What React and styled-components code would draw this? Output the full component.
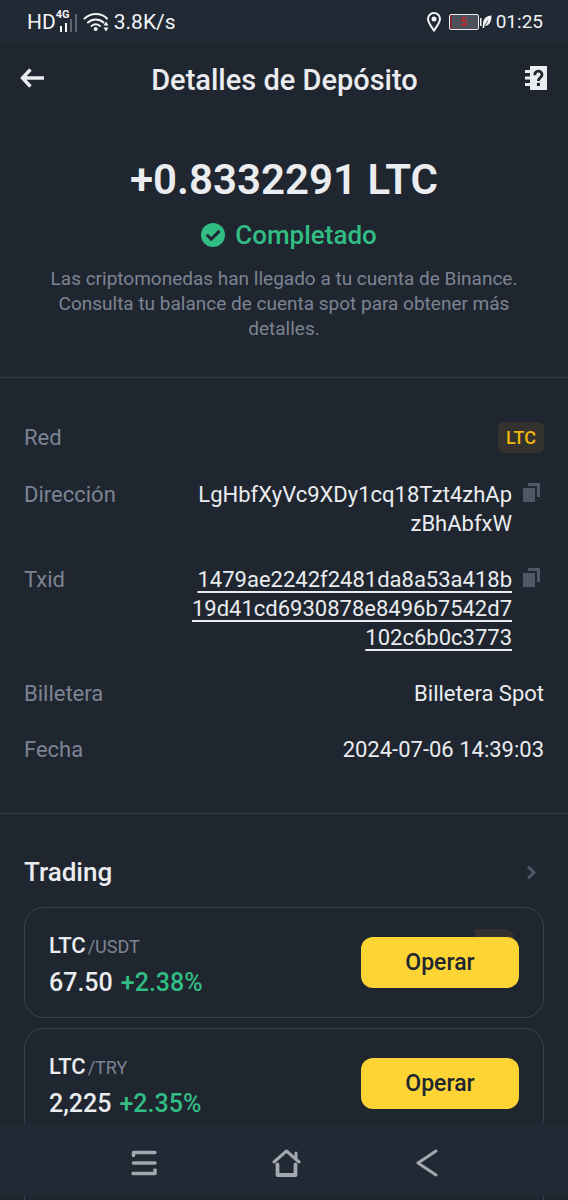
import React from "react";
import styled,{createGlobalStyle} from "styled-components";

const colors = {
    BG:"#1f2630",
    BAR:"#212934",
    LINE:"#323a46",
    WHITE:"#eaecef",
    GREY:"#7c8493",
    ICON:"#505767",
    GREEN:"#31bd83",
    YELLOW:"#fcd535",
    GOLD:"#f0b90b",
    GOLDBG:"#34322e",
    NAV:"#a3a7af",
    RED:"#c4252a"
};

const GlobalStyle = createGlobalStyle`
    *{box-sizing:border-box;}
    body{margin:0;background:${colors.BG};color:${colors.WHITE};font-family:Roboto,"Noto Sans",sans-serif;}
    button{font-family:inherit;border:none;background:none;padding:0;cursor:pointer;}
    svg{display:block;flex-shrink:0;}
`;
const Screen = styled.div`
    height:100vh;overflow:hidden;display:flex;flex-direction:column;
`;
const StatusBar = styled.div`
    height:44px;flex-shrink:0;padding:0 25px 0 27px;background:${colors.BAR};display:flex;align-items:center;justify-content:space-between;font-size:21px;line-height:24px;color:#f2f4f6;
`;
const StatusGroup = styled.div`
    display:flex;align-items:center;gap:${({$gap}) => $gap};
`;
const Clock = styled.span`
    font-size:19px;
`;
const Signal = styled.span`
    position:relative;display:block;
    & span{position:absolute;top:-2px;left:0;font-size:11px;line-height:12px;font-weight:700;}
`;
const Battery = styled.span`
    width:30px;height:16px;border:1px solid ${colors.WHITE};border-radius:2px;background:#4c525b;box-shadow:inset 2px 0 0 #7d2b31;color:${colors.RED};display:flex;align-items:center;justify-content:center;font-size:12px;line-height:14px;font-weight:700;
`;
const Header = styled.header`
    height:72px;flex-shrink:0;padding:0 21px 4px 20px;display:flex;align-items:center;justify-content:space-between;
    & h1{margin:4px 0 0;font-size:29px;line-height:32px;font-weight:500;}
    & button{color:${colors.WHITE};}
`;
const Content = styled.main`
    flex:1;min-height:0;overflow-y:auto;scrollbar-width:none;
`;
const Hero = styled.section`
    padding:40px 40px 36px;display:flex;flex-direction:column;align-items:center;gap:15px;text-align:center;border-bottom:1px solid ${colors.LINE};
`;
const Amount = styled.div`
    font-size:42px;line-height:48px;font-weight:600;
`;
const Status = styled.div`
    padding-left:10px;display:flex;align-items:center;gap:10px;color:${colors.GREEN};font-size:26px;line-height:32px;font-weight:500;
`;
const Note = styled.p`
    margin:0;font-size:19px;line-height:25px;color:${colors.GREY};
`;
const Details = styled.dl`
    margin:0;padding:44px 24px 49px;display:flex;flex-direction:column;gap:27px;border-bottom:1px solid ${colors.LINE};
`;
const Row = styled.div`
    display:flex;align-items:${({$center}) => $center ? "center" : "flex-start"};justify-content:space-between;font-size:22px;line-height:29px;
    & dt{color:${colors.GREY};}
    & dd{margin:0;display:flex;align-items:flex-start;gap:11px;text-align:right;}
`;
const Badge = styled.span`
    padding:0 8px;border-radius:6px;background:${colors.GOLDBG};color:${colors.GOLD};font-size:18px;line-height:31px;font-weight:500;
`;
const Line = styled.span`
    display:block;
`;
const HashLink = styled.a`
    color:inherit;text-decoration:underline;text-decoration-thickness:2px;text-underline-offset:4px;
`;
const CopyButton = styled.button`
    margin:3px 4px 0 0;color:${colors.ICON};
`;
const Trading = styled.section`
    padding:42px 24px 0;
`;
const TradingHead = styled.div`
    display:flex;align-items:center;justify-content:space-between;padding-right:8px;margin-bottom:19px;
    & h2{margin:0;font-size:26px;line-height:32px;font-weight:500;}
    & button{color:${colors.ICON};}
`;
const Cards = styled.div`
    display:flex;flex-direction:column;gap:10px;
`;
const Card = styled.article`
    min-height:111px;padding:0 24px;border:1px solid #3a424e;border-radius:20px;display:flex;align-items:center;justify-content:space-between;
`;
const Quote = styled.div`
    padding-top:4px;
`;
const Pair = styled.div`
    font-size:22px;line-height:36px;font-weight:500;
    & small{margin-left:2px;font-size:18px;font-weight:400;color:${colors.GREY};}
`;
const Price = styled.div`
    display:flex;gap:8px;font-size:25px;line-height:36px;font-weight:500;
    & span{color:${colors.GREEN};}
`;
const TradeWrap = styled.div`
    position:relative;
    ${({$ghost}) => $ghost && `
        &::before{content:"";position:absolute;top:-8px;right:4px;width:40px;height:24px;border-radius:0 12px 0 0;background:${colors.GOLDBG};}
    `}
`;
const TradeButton = styled.button`
    position:relative;display:block;width:158px;height:51px;border-radius:12px;color:#202630;font-size:23px;line-height:28px;font-weight:500;
    button&{background:${colors.YELLOW};}
`;
const SystemNav = styled.nav`
    position:fixed;left:0;right:0;bottom:4px;height:72px;background:${colors.BAR};color:${colors.NAV};display:flex;align-items:center;justify-content:center;gap:115px;padding-top:5px;
    & button{color:inherit;}
`;

const SignalIcon = () => (
    <svg width="22" height="22" viewBox="0 0 22 22" fill="none" strokeWidth="2">
        <path d="M5 15v6M10 12v9" stroke="#f2f4f6"/>
        <path d="M15 8v13M20 3v18" stroke="#5d646e"/>
    </svg>
);
const WifiIcon = () => (
    <svg width="26" height="20" viewBox="0 0 26 20" fill="none" stroke="#f2f4f6" strokeWidth="2" strokeLinecap="round">
        <path d="M1.500 6.500C8 .500 18 .500 24 6.500M5 10.500c4.500-4 11-4 15.500 0M8.500 14c2.500-2 6-2 8.500 0"/>
        <circle cx="12.700" cy="17" r="1" fill="#f2f4f6"/>
        <path d="M23 9.500l2.500 4h-5zM23 19.500l2.500-4h-5z" fill="#f2f4f6" stroke="none"/>
    </svg>
);
const PinIcon = () => (
    <svg width="14" height="20" viewBox="0 0 14 20" fill="none" stroke="#f2f4f6" strokeWidth="2">
        <path d="M7 18.500C4 14 1 10.500 1 7a6 6 0 0 1 12 0c0 3.500-3 7-6 11.500z"/>
        <circle cx="7" cy="7" r="2.500" fill="#f2f4f6" stroke="none"/>
    </svg>
);
const LeafIcon = () => (
    <svg width="13" height="14" viewBox="0 0 13 14" fill="#f2f4f6">
        <path d="M1 3h1.500v8H1z"/>
        <path d="M12.500.500C7 1 4 4 4 9l-.500 4H5l.600-2C11 10.500 12.500 6 12.500.500z"/>
        <path d="M5.500 11l3.500-5.500" stroke={colors.BAR} strokeWidth=".8"/>
    </svg>
);
const BackIcon = () => (
    <svg width="24" height="20" viewBox="0 0 24 20" fill="none" stroke="currentColor" strokeWidth="3.400">
        <path d="M10.500 1.500L2.500 10l8 8.500M2.500 10H24"/>
    </svg>
);
const HelpIcon = () => (
    <svg width="22" height="24" viewBox="0 0 22 24">
        <path fill="currentColor" d="M5 0h17v24H5v-4H0v-3h5v-3.500H0v-3h5V7H0V4h5z"/>
        <path d="M9.800 9.300V8.800a3.600 3.600 0 0 1 7.200 0c0 2.700-3.600 2.700-3.600 6.200" fill="none" stroke={colors.BG} strokeWidth="2.800"/>
        <path fill={colors.BG} d="M11.900 16.800h3V20h-3z"/>
    </svg>
);
const CheckIcon = () => (
    <svg width="24" height="24" viewBox="0 0 24 24">
        <circle cx="12" cy="12" r="12" fill="currentColor"/>
        <path d="M5.800 11.800l4.400 4.400 8.300-8.300" fill="none" stroke={colors.BG} strokeWidth="3"/>
    </svg>
);
const CopyIcon = () => (
    <svg width="17" height="19" viewBox="0 0 17 19" fill="currentColor">
        <path d="M0 5h12v14H0zM5 0h12v14h-3V3H5z"/>
    </svg>
);
const ChevronIcon = () => (
    <svg width="9" height="15" viewBox="0 0 9 15" fill="none" stroke="currentColor" strokeWidth="3">
        <path d="M1 1.500l6 6-6 6"/>
    </svg>
);
const MenuIcon = () => (
    <svg width="26" height="26" viewBox="0 0 26 26" fill="none" stroke="currentColor" strokeWidth="3.500" strokeLinecap="round" strokeLinejoin="round">
        <path d="M2.500 5.500V2.500H24M2.500 13H24M2 23.500h22v-3.500"/>
    </svg>
);
const HomeIcon = () => (
    <svg width="29" height="28" viewBox="0 0 29 28" fill="none" stroke="currentColor" strokeWidth="3" strokeLinecap="round" strokeLinejoin="round">
        <path d="M2 13L14.500 2 27 13M24 9V4"/>
        <path d="M5.500 15.500V26h18V15.500" strokeWidth="3.800"/>
    </svg>
);
const NavBackIcon = () => (
    <svg width="22" height="28" viewBox="0 0 22 28" fill="none" stroke="currentColor" strokeWidth="3" strokeLinecap="round" strokeLinejoin="round">
        <path d="M20 2L2 14l18 12"/>
    </svg>
);

const address = ["LgHbfXyVc9XDy1cq18Tzt4zhAp","zBhAbfxW"];
const txid = ["1479ae2242f2481da8a53a418b","19d41cd6930878e8496b7542d7","102c6b0c3773"];
const pairs = [
    {base:"LTC",quote:"USDT",price:"67.50",change:"+2.38%",ghost:true},
    {base:"LTC",quote:"TRY",price:"2,225",change:"+2.35%",ghost:false}
];

const App = () => {
    const copy = (lines) => {
        navigator.clipboard?.writeText(lines.join(""));
    }
    return (
        <React.Fragment>
            <GlobalStyle/>
            <Screen>
                <StatusBar>
                    <StatusGroup $gap="5px">
                        <StatusGroup $gap="0">
                            <span>HD</span>
                            <Signal><span>4G</span><SignalIcon/></Signal>
                        </StatusGroup>
                        <WifiIcon/>
                        <span>3.8K/s</span>
                    </StatusGroup>
                    <StatusGroup $gap="4px">
                        <StatusGroup $gap="8px">
                            <PinIcon/>
                            <StatusGroup $gap="0">
                                <Battery>5</Battery>
                                <LeafIcon/>
                            </StatusGroup>
                        </StatusGroup>
                        <Clock>01:25</Clock>
                    </StatusGroup>
                </StatusBar>
                <Header>
                    <button type="button" aria-label="Volver"><BackIcon/></button>
                    <h1>Detalles de Depósito</h1>
                    <button type="button" aria-label="Ayuda"><HelpIcon/></button>
                </Header>
                <Content>
                    <Hero>
                        <Amount>+0.8332291 LTC</Amount>
                        <Status><CheckIcon/>Completado</Status>
                        <Note>Las criptomonedas han llegado a tu cuenta de Binance. Consulta tu balance de cuenta spot para obtener más detalles.</Note>
                    </Hero>
                    <Details>
                        <Row $center>
                            <dt>Red</dt>
                            <dd><Badge>LTC</Badge></dd>
                        </Row>
                        <Row>
                            <dt>Dirección</dt>
                            <dd>
                                <span>{address.map((l) => (<Line key={l}>{l}</Line>))}</span>
                                <CopyButton type="button" aria-label="Copiar dirección" onClick={() => copy(address)}><CopyIcon/></CopyButton>
                            </dd>
                        </Row>
                        <Row>
                            <dt>Txid</dt>
                            <dd>
                                <HashLink href="#txid">{txid.map((l) => (<Line key={l}>{l}</Line>))}</HashLink>
                                <CopyButton type="button" aria-label="Copiar Txid" onClick={() => copy(txid)}><CopyIcon/></CopyButton>
                            </dd>
                        </Row>
                        <Row>
                            <dt>Billetera</dt>
                            <dd>Billetera Spot</dd>
                        </Row>
                        <Row>
                            <dt>Fecha</dt>
                            <dd>2024-07-06 14:39:03</dd>
                        </Row>
                    </Details>
                    <Trading>
                        <TradingHead>
                            <h2>Trading</h2>
                            <button type="button" aria-label="Ver todo"><ChevronIcon/></button>
                        </TradingHead>
                        <Cards>
                            {pairs.map((p) => (
                                <Card key={p.quote}>
                                    <Quote>
                                        <Pair>{p.base}<small>/{p.quote}</small></Pair>
                                        <Price>{p.price}<span>{p.change}</span></Price>
                                    </Quote>
                                    <TradeWrap $ghost={p.ghost}>
                                        <TradeButton type="button">Operar</TradeButton>
                                    </TradeWrap>
                                </Card>
                            ))}
                            <Card aria-hidden="true"/>
                        </Cards>
                    </Trading>
                </Content>
                <SystemNav>
                    <button type="button" aria-label="Recientes"><MenuIcon/></button>
                    <button type="button" aria-label="Inicio"><HomeIcon/></button>
                    <button type="button" aria-label="Atrás"><NavBackIcon/></button>
                </SystemNav>
            </Screen>
        </React.Fragment>
    );
}
export default App;
